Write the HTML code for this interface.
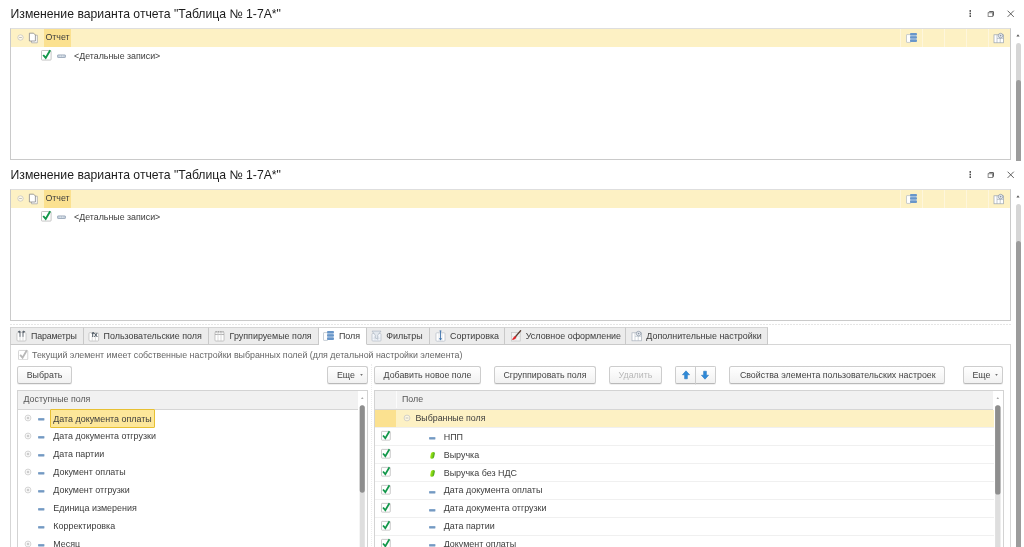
<!DOCTYPE html>
<html lang="ru"><head><meta charset="utf-8"><title>Изменение варианта отчета</title>
<style>
html,body{margin:0;padding:0;background:#fff}
body{width:1024px;height:547px;position:relative;overflow:hidden;font-family:"Liberation Sans",sans-serif;}
.a{position:absolute}
.t{position:absolute;white-space:nowrap;line-height:0;height:0}
.t::before{content:"";display:inline-block;height:0;vertical-align:baseline}
.btn{position:absolute;box-sizing:border-box;border:1px solid #cdcdcd;border-bottom-color:#b9b9b9;border-radius:2.5px;background:linear-gradient(#ffffff,#f1f1f1);text-align:center;font-size:8.85px;white-space:nowrap;box-shadow:0 1px 0 rgba(0,0,0,0.06)}
.tab{position:absolute;top:327px;height:18px;box-sizing:border-box;border:1px solid #c9c9c9;border-top-color:#d4d4d4;border-left:none;background:#ececec;font-size:8.85px;color:#333;white-space:nowrap}
.row{position:absolute;height:18px}
</style></head><body><div id="root" style="position:absolute;left:0;top:0;width:1024px;height:547px;will-change:transform">
<div class="t" style="left:10.5px;top:14.07px;font-size:12.22px;color:#1c1c1c;">Изменение варианта отчета "Таблица № 1-7А*"</div>

<svg class="a" style="left:965px;top:7px" width="52" height="14" viewBox="0 -0.4 52 14">
 <g fill="#4a4a4a"><rect x="4.5" y="2.7" width="1.5" height="1.7"/><rect x="4.5" y="5.3" width="1.5" height="1.7"/><rect x="4.5" y="7.9" width="1.5" height="1.7"/></g>
 <g fill="none"><path d="M24.3 4.25H28.4V8.3" stroke="#4a4a4a" stroke-width="1"/><path d="M23.1 5.4l1.2-1.15M27.7 9.1l0.7-0.8" stroke="#666" stroke-width="0.7"/><rect x="23.1" y="5.4" width="4.6" height="3.7" fill="#fff" stroke="#707070" stroke-width="0.8"/></g>
 <g stroke="#444" stroke-width="0.85"><path d="M42.6 3.3l6.2 6.2M48.8 3.3l-6.2 6.2"/></g>
</svg>
<div class="a" style="left:10px;top:28px;width:1001px;height:132px;border:1px solid #cacaca;border-top-color:#dedede;box-sizing:border-box;background:#fff"></div>
<div class="a" style="left:11px;top:29px;width:999px;height:18px;background:#fdf1c4"></div>
<div class="a" style="left:44px;top:29px;width:27px;height:18px;background:#fbe190"></div>
<div class="a" style="left:900px;top:29px;width:1px;height:18px;background:#fef6dc"></div>
<div class="a" style="left:922px;top:29px;width:1px;height:18px;background:#fef6dc"></div>
<div class="a" style="left:944px;top:29px;width:1px;height:18px;background:#fef6dc"></div>
<div class="a" style="left:966px;top:29px;width:1px;height:18px;background:#fef6dc"></div>
<div class="a" style="left:988px;top:29px;width:1px;height:18px;background:#fef6dc"></div>
<svg class="a" style="left:16px;top:32.9px" width="9" height="9" viewBox="0 0 9 9"><circle cx="4.5" cy="4.5" r="2.7" fill="#fff" fill-opacity="0.6" stroke="#c0c0c0" stroke-width="0.7"/><path d="M3.1 4.5h2.8" stroke="#a8a8a8" stroke-width="0.7"/></svg>
<svg class="a" style="left:28px;top:32px" width="11" height="12" viewBox="0 0 11 12"><path d="M3.5 3.2h5.8v7.6h-5.8z" fill="#fff" stroke="#aaa" stroke-width="0.8"/><path d="M1.4 1.2h4.2l1.8 1.8v6h-6z" fill="#fff" stroke="#888" stroke-width="0.8"/></svg>
<div class="t" style="left:45.4px;top:37.33px;font-size:8.85px;color:#3c3c3c;">Отчет</div>
<svg class="a" style="left:41px;top:48.7px" width="12" height="12" viewBox="0 0 12 12"><rect x="0.5" y="1.5" width="9.6" height="9.6" rx="0.8" fill="#fff" stroke="#bdbdbd" stroke-width="0.9"/><path d="M1.2 11.4h8.4" stroke="#e2e2e2" stroke-width="0.6"/><path d="M2.2 6l2.5 2.9 4.5-7.6" fill="none" stroke="#12974a" stroke-width="1.9" stroke-linecap="butt"/></svg>
<svg class="a" style="left:57px;top:54.2px" width="9" height="5" viewBox="0 0 9 5"><rect x="0.4" y="0.9" width="8.2" height="2.6" rx="0.8" fill="#c3cfdc" stroke="#8797aa" stroke-width="0.7"/><path d="M3.2 1.4v1.6M5.8 1.4v1.6" stroke="#f4f6f8" stroke-width="0.7"/></svg>
<div class="t" style="left:74px;top:56.13px;font-size:8.85px;color:#3c3c3c;">&lt;Детальные записи&gt;</div>
<svg class="a" style="left:906px;top:32px" width="12" height="12" viewBox="0 0 12 12"><rect x="0.5" y="2.6" width="4.2" height="7.8" rx="0.5" fill="#fff" stroke="#a4aebb" stroke-width="0.6"/><rect x="4.4" y="1.6" width="6.2" height="7.6" fill="#b6cde6"/><rect x="4" y="1" width="7" height="2.2" rx="1" fill="#6896c9"/><rect x="4" y="4.3" width="7" height="2.1" rx="1" fill="#6896c9"/><rect x="4" y="7.6" width="7" height="2.3" rx="1" fill="#6896c9"/></svg>
<svg class="a" style="left:993px;top:31.5px" width="12" height="12" viewBox="0 0 12 12">
      <rect x="1" y="2.8" width="9.4" height="8" fill="#fff" stroke="#98a2ae" stroke-width="0.7"/>
      <path d="M4 2.8v8M7.2 6v4.8M4 6.4h6.4" stroke="#98a2ae" stroke-width="0.6"/>
      <circle cx="7.6" cy="3.6" r="2.3" fill="#e4e8ee" stroke="#8894a2" stroke-width="0.7"/><circle cx="7.6" cy="3.6" r="0.8" fill="#8894a2"/></svg>
<div class="a" style="left:0;top:160px;width:1013px;height:29px;background:#fff"></div>
<div class="t" style="left:10.5px;top:175.07px;font-size:12.22px;color:#1c1c1c;">Изменение варианта отчета "Таблица № 1-7А*"</div>

<svg class="a" style="left:965px;top:168px" width="52" height="14" viewBox="0 -0.4 52 14">
 <g fill="#4a4a4a"><rect x="4.5" y="2.7" width="1.5" height="1.7"/><rect x="4.5" y="5.3" width="1.5" height="1.7"/><rect x="4.5" y="7.9" width="1.5" height="1.7"/></g>
 <g fill="none"><path d="M24.3 4.25H28.4V8.3" stroke="#4a4a4a" stroke-width="1"/><path d="M23.1 5.4l1.2-1.15M27.7 9.1l0.7-0.8" stroke="#666" stroke-width="0.7"/><rect x="23.1" y="5.4" width="4.6" height="3.7" fill="#fff" stroke="#707070" stroke-width="0.8"/></g>
 <g stroke="#444" stroke-width="0.85"><path d="M42.6 3.3l6.2 6.2M48.8 3.3l-6.2 6.2"/></g>
</svg>
<div class="a" style="left:10px;top:189px;width:1001px;height:132px;border:1px solid #cacaca;border-top-color:#dedede;box-sizing:border-box;background:#fff"></div>
<div class="a" style="left:11px;top:190px;width:999px;height:18px;background:#fdf1c4"></div>
<div class="a" style="left:44px;top:190px;width:27px;height:18px;background:#fbe190"></div>
<div class="a" style="left:900px;top:190px;width:1px;height:18px;background:#fef6dc"></div>
<div class="a" style="left:922px;top:190px;width:1px;height:18px;background:#fef6dc"></div>
<div class="a" style="left:944px;top:190px;width:1px;height:18px;background:#fef6dc"></div>
<div class="a" style="left:966px;top:190px;width:1px;height:18px;background:#fef6dc"></div>
<div class="a" style="left:988px;top:190px;width:1px;height:18px;background:#fef6dc"></div>
<svg class="a" style="left:16px;top:193.9px" width="9" height="9" viewBox="0 0 9 9"><circle cx="4.5" cy="4.5" r="2.7" fill="#fff" fill-opacity="0.6" stroke="#c0c0c0" stroke-width="0.7"/><path d="M3.1 4.5h2.8" stroke="#a8a8a8" stroke-width="0.7"/></svg>
<svg class="a" style="left:28px;top:193px" width="11" height="12" viewBox="0 0 11 12"><path d="M3.5 3.2h5.8v7.6h-5.8z" fill="#fff" stroke="#aaa" stroke-width="0.8"/><path d="M1.4 1.2h4.2l1.8 1.8v6h-6z" fill="#fff" stroke="#888" stroke-width="0.8"/></svg>
<div class="t" style="left:45.4px;top:198.33px;font-size:8.85px;color:#3c3c3c;">Отчет</div>
<svg class="a" style="left:41px;top:209.7px" width="12" height="12" viewBox="0 0 12 12"><rect x="0.5" y="1.5" width="9.6" height="9.6" rx="0.8" fill="#fff" stroke="#bdbdbd" stroke-width="0.9"/><path d="M1.2 11.4h8.4" stroke="#e2e2e2" stroke-width="0.6"/><path d="M2.2 6l2.5 2.9 4.5-7.6" fill="none" stroke="#12974a" stroke-width="1.9" stroke-linecap="butt"/></svg>
<svg class="a" style="left:57px;top:215.2px" width="9" height="5" viewBox="0 0 9 5"><rect x="0.4" y="0.9" width="8.2" height="2.6" rx="0.8" fill="#c3cfdc" stroke="#8797aa" stroke-width="0.7"/><path d="M3.2 1.4v1.6M5.8 1.4v1.6" stroke="#f4f6f8" stroke-width="0.7"/></svg>
<div class="t" style="left:74px;top:217.13px;font-size:8.85px;color:#3c3c3c;">&lt;Детальные записи&gt;</div>
<svg class="a" style="left:906px;top:193px" width="12" height="12" viewBox="0 0 12 12"><rect x="0.5" y="2.6" width="4.2" height="7.8" rx="0.5" fill="#fff" stroke="#a4aebb" stroke-width="0.6"/><rect x="4.4" y="1.6" width="6.2" height="7.6" fill="#b6cde6"/><rect x="4" y="1" width="7" height="2.2" rx="1" fill="#6896c9"/><rect x="4" y="4.3" width="7" height="2.1" rx="1" fill="#6896c9"/><rect x="4" y="7.6" width="7" height="2.3" rx="1" fill="#6896c9"/></svg>
<svg class="a" style="left:993px;top:192.5px" width="12" height="12" viewBox="0 0 12 12">
      <rect x="1" y="2.8" width="9.4" height="8" fill="#fff" stroke="#98a2ae" stroke-width="0.7"/>
      <path d="M4 2.8v8M7.2 6v4.8M4 6.4h6.4" stroke="#98a2ae" stroke-width="0.6"/>
      <circle cx="7.6" cy="3.6" r="2.3" fill="#e4e8ee" stroke="#8894a2" stroke-width="0.7"/><circle cx="7.6" cy="3.6" r="0.8" fill="#8894a2"/></svg>
<svg class="a" style="left:1016.4px;top:34.2px" width="4" height="3" viewBox="0 0 4 3"><path d="M0.4 2.6l1.6-2.3 1.6 2.3z" fill="#555"/></svg>
<div class="a" style="left:1016px;top:43px;width:5px;height:118px;border-radius:3px;background:#d6d6d6"></div>
<div class="a" style="left:1016px;top:80px;width:5px;height:81px;border-radius:3px 3px 0 0;background:#9c9c9c"></div>
<svg class="a" style="left:1016.4px;top:195.2px" width="4" height="3" viewBox="0 0 4 3"><path d="M0.4 2.6l1.6-2.3 1.6 2.3z" fill="#555"/></svg>
<div class="a" style="left:1016px;top:204px;width:5px;height:356px;border-radius:3px;background:#d6d6d6"></div>
<div class="a" style="left:1016px;top:241px;width:5px;height:319px;border-radius:3px 3px 0 0;background:#9c9c9c"></div>
<div class="a" style="left:10px;top:324px;width:1001px;height:1px;background:repeating-linear-gradient(90deg,#e6e6e6 0,#e6e6e6 2px,transparent 2px,transparent 3px)"></div>
<div class="a" style="left:10px;top:344px;width:1001px;height:220px;border:1px solid #d6d6d6;box-sizing:border-box;background:#fff"></div>
<div class="tab" style="left:10px;width:73.6px;border-left:1px solid #cfcfcf;"></div>
<svg class="a" style="left:15.5px;top:329.5px" width="11" height="12" viewBox="0 0 11 12"><rect x="1" y="2.6" width="9" height="8.4" rx="1" fill="#fff" stroke="#b9b9b9" stroke-width="0.7"/><path d="M4 6.5v4.3M7 6.5v4.3" stroke="#cdcdcd" stroke-width="0.7"/><path d="M4 1v5.8M7 1v5.8" stroke="#4c5660" stroke-width="0.9"/><path d="M3.8 0.5v2.6l-2.2-1.3zM7.2 0.5v2.6l2.2-1.3z" fill="#4c5660"/></svg>
<div class="t" style="left:31px;top:335.73px;font-size:8.85px;color:#3c3c3c;letter-spacing:-0.17px">Параметры</div>
<div class="tab" style="left:83.6px;width:125.0px;"></div>
<svg class="a" style="left:88.0px;top:329.5px" width="12" height="12" viewBox="0 0 12 12"><rect x="1" y="2.6" width="9.6" height="8.4" rx="1" fill="#fff" stroke="#b9b9b9" stroke-width="0.7"/><path d="M4.2 6v4.8M7.4 6v4.8" stroke="#cdcdcd" stroke-width="0.7"/><text x="3.4" y="6.6" font-size="7.4" font-weight="bold" fill="#4c5660" font-family="Liberation Sans, sans-serif" letter-spacing="-0.2">fx</text></svg>
<div class="t" style="left:103.5px;top:335.71px;font-size:8.93px;color:#3c3c3c;">Пользовательские поля</div>
<div class="tab" style="left:208.6px;width:110.6px;"></div>
<svg class="a" style="left:214.1px;top:329.5px" width="11" height="12" viewBox="0 0 11 12"><rect x="1" y="2" width="9" height="9" rx="0.8" fill="#fff" stroke="#b0b0b0" stroke-width="0.7"/><path d="M1 4.4h9" stroke="#999" stroke-width="0.8"/><path d="M4 2v9M7 2v9" stroke="#c8c8c8" stroke-width="0.7"/><path d="M1.4 1.8h8.2" stroke="#888" stroke-width="0.9" stroke-dasharray="1.4 1"/></svg>
<div class="t" style="left:229.6px;top:335.71px;font-size:8.93px;color:#3c3c3c;">Группируемые поля</div>
<div class="tab" style="left:319.2px;width:48.0px;background:#fff;border-bottom-color:#fff;"></div>
<svg class="a" style="left:323.4px;top:329.5px" width="12" height="12" viewBox="0 0 12 12"><rect x="0.5" y="2.6" width="4.2" height="7.8" rx="0.5" fill="#fff" stroke="#a4aebb" stroke-width="0.6"/><rect x="4.4" y="1.6" width="6.2" height="7.6" fill="#b6cde6"/><rect x="4" y="1" width="7" height="2.2" rx="1" fill="#6896c9"/><rect x="4" y="4.3" width="7" height="2.1" rx="1" fill="#6896c9"/><rect x="4" y="7.6" width="7" height="2.3" rx="1" fill="#6896c9"/></svg>
<div class="t" style="left:338.9px;top:335.71px;font-size:8.93px;color:#3c3c3c;">Поля</div>
<div class="tab" style="left:367.2px;width:62.80000000000001px;"></div>
<svg class="a" style="left:370.7px;top:329.5px" width="11" height="12" viewBox="0 0 11 12"><rect x="1" y="3.4" width="9" height="7.6" rx="0.8" fill="#f3f6fa" stroke="#b4bcc6" stroke-width="0.7"/><path d="M4 6v5M7 6v5M1 8.2h9" stroke="#d2d9e2" stroke-width="0.6"/><path d="M1 1.1h9l-3.3 4.1v4l-2.4-1.2v-2.8z" fill="#e3e8ee" stroke="#a3adba" stroke-width="0.6"/></svg>
<div class="t" style="left:386.2px;top:335.71px;font-size:8.93px;color:#3c3c3c;">Фильтры</div>
<div class="tab" style="left:430px;width:74.5px;"></div>
<svg class="a" style="left:434.5px;top:329.5px" width="11" height="12" viewBox="0 0 11 12"><rect x="1" y="2.8" width="9" height="8.4" rx="0.9" fill="#fff" stroke="#b4bcc6" stroke-width="0.7"/><path d="M4 2.8v8.4M7 2.8v8.4" stroke="#d4dae2" stroke-width="0.7"/><path d="M5.5 0.6v8.4" stroke="#3f74ad" stroke-width="0.9"/><path d="M3.9 8.2l1.6 2.3 1.6-2.3z" fill="#3f74ad"/><path d="M4.4 1h2.2" stroke="#3f74ad" stroke-width="0.7"/></svg>
<div class="t" style="left:450px;top:335.71px;font-size:8.93px;color:#3c3c3c;">Сортировка</div>
<div class="tab" style="left:504.5px;width:121.0px;"></div>
<svg class="a" style="left:510.29999999999995px;top:329.5px" width="12" height="12" viewBox="0 0 12 12"><rect x="1.6" y="2.6" width="8.6" height="8.4" fill="#f4f4f4" stroke="#c4c4c4" stroke-width="0.7"/><path d="M1.6 6.4h8.6M6 2.6v8.4" stroke="#d8d8d8" stroke-width="0.6"/><path d="M10.6 0.8l-5.6 6.4" stroke="#5a3c30" stroke-width="1.3" stroke-linecap="round"/><path d="M5.6 6.2c-1.4 0.2-2.6 1.6-3.8 3.6 1.8 0.2 3.8-0.6 4.6-2.6z" fill="#e0262a"/></svg>
<div class="t" style="left:525.8px;top:335.71px;font-size:8.93px;color:#3c3c3c;">Условное оформление</div>
<div class="tab" style="left:625.5px;width:142.0px;"></div>
<svg class="a" style="left:630.8px;top:329.5px" width="12" height="12" viewBox="0 0 12 12"><rect x="1" y="2.8" width="9.4" height="8" fill="#fff" stroke="#a8b0ba" stroke-width="0.7"/><path d="M4 2.8v8M7.2 6v4.8M4 6.4h6.4" stroke="#b4bcc6" stroke-width="0.6"/><circle cx="7.6" cy="3.6" r="2.3" fill="#e4e8ee" stroke="#8894a2" stroke-width="0.7"/><circle cx="7.6" cy="3.6" r="0.8" fill="#8894a2"/></svg>
<div class="t" style="left:646.3px;top:335.71px;font-size:8.93px;color:#3c3c3c;">Дополнительные настройки</div>
<svg class="a" style="left:18px;top:348.6px" width="11.6" height="11.6" viewBox="0 0 12 12"><rect x="0.5" y="1.5" width="9.6" height="9.6" rx="0.8" fill="#fff" stroke="#cfcfcf" stroke-width="0.9"/><path d="M1.2 11.4h8.4" stroke="#e2e2e2" stroke-width="0.6"/><path d="M2.2 6l2.5 2.9 4.5-7.6" fill="none" stroke="#b9b9b9" stroke-width="1.9" stroke-linecap="butt"/></svg>
<div class="t" style="left:32px;top:355.23px;font-size:8.85px;color:#666;">Текущий элемент имеет собственные настройки выбранных полей (для детальной настройки элемента)</div>
<div class="btn" style="left:17px;top:366px;width:55px;height:17.5px;line-height:16.0px;color:#444">Выбрать</div>
<div class="btn" style="left:327px;top:366px;width:41px;height:17.5px;line-height:16.0px;color:#444"><span style="padding-left:4.5px"></span>Еще<svg width="3" height="2" viewBox="0 0 3 2" style="margin-left:4.6px;position:relative;top:-1.6px"><path d="M0.2 0.3h2.6l-1.3 1.5z" fill="#444"/></svg></div>
<div class="btn" style="left:374px;top:366px;width:107px;height:17.5px;line-height:16.0px;color:#444">Добавить новое поле</div>
<div class="btn" style="left:494px;top:366px;width:102px;height:17.5px;line-height:16.0px;color:#444">Сгруппировать поля</div>
<div class="btn" style="left:609px;top:366px;width:53px;height:17.5px;line-height:16.0px;color:#b8b8b8">Удалить</div>
<div class="btn" style="left:675px;top:366px;width:21px;height:17.5px;border-radius:2px 0 0 2px"></div>
<div class="btn" style="left:695px;top:366px;width:21px;height:17.5px;border-radius:0 2px 2px 0"></div>
<svg class="a" style="left:680.5px;top:369.5px" width="10" height="10" viewBox="0 0 10 10"><path d="M5 0.8l3.6 4h-2.2v4h-2.8v-4h-2.2z" fill="#2f8ad8" stroke="#1f6fb8" stroke-width="0.5"/></svg>
<svg class="a" style="left:700px;top:369.5px" width="10" height="10" viewBox="0 0 10 10"><path d="M5 9.2l3.6-4h-2.2v-4h-2.8v4h-2.2z" fill="#2f8ad8" stroke="#1f6fb8" stroke-width="0.5"/></svg>
<div class="btn" style="left:729px;top:366px;width:216px;height:17.5px;line-height:16.0px;color:#444"><span style="padding-left:1.5px"></span>Свойства элемента пользовательских настроек</div>
<div class="btn" style="left:963px;top:366px;width:40px;height:17.5px;line-height:16.0px;color:#444"><span style="padding-left:4.5px"></span>Еще<svg width="3" height="2" viewBox="0 0 3 2" style="margin-left:4.6px;position:relative;top:-1.6px"><path d="M0.2 0.3h2.6l-1.3 1.5z" fill="#444"/></svg></div>
<div class="a" style="left:370.5px;top:364px;width:0;height:190px;border-left:1px dotted #ededed"></div>
<div class="a" style="left:17px;top:390px;width:351px;height:170px;border:1px solid #d3d3d3;box-sizing:border-box;background:#fff"></div>
<div class="a" style="left:18px;top:391px;width:340px;height:19px;background:#f1f1f1;border-bottom:1px solid #d6d6d6;box-sizing:border-box"></div>
<div class="t" style="left:23.5px;top:399.23px;font-size:8.85px;color:#555;">Доступные поля</div>
<svg class="a" style="left:358px;top:395px" width="9" height="160" viewBox="0 0 9 160"><path d="M2.95 4l1.3-2.1 1.3 2.1z" fill="#aaa"/><rect x="1.70" y="10.2" width="5.1" height="160" rx="2.6" fill="#dedede"/><rect x="1.70" y="10.2" width="5.1" height="87.5" rx="2.6" fill="#8e8e8e"/></svg>
<div class="a" style="left:50px;top:409px;width:105px;height:19px;background:#fde79a;border:1px solid #e7c033;box-sizing:border-box;border-radius:1px"></div>
<svg class="a" style="left:23.7px;top:414.4px" width="8" height="8" viewBox="0 0 8 8"><circle cx="4" cy="4" r="2.9" fill="#fff" stroke="#c2c2c2" stroke-width="0.7"/><path d="M2.6 4h2.8M4 2.6v2.8" stroke="#aaa" stroke-width="0.7"/></svg>
<svg class="a" style="left:38px;top:417.4px" width="7" height="5" viewBox="0 0 7 5"><rect x="0.1" y="1.05" width="6.3" height="2.5" rx="0.9" fill="#7096c0"/><rect x="0.1" y="1.05" width="6.3" height="1.1" rx="0.6" fill="#8fb0d2" opacity="0.6"/></svg>
<div class="t" style="left:53.3px;top:418.51px;font-size:8.93px;color:#3c3c3c;">Дата документа оплаты</div>
<svg class="a" style="left:23.7px;top:432.34999999999997px" width="8" height="8" viewBox="0 0 8 8"><circle cx="4" cy="4" r="2.9" fill="#fff" stroke="#c2c2c2" stroke-width="0.7"/><path d="M2.6 4h2.8M4 2.6v2.8" stroke="#aaa" stroke-width="0.7"/></svg>
<svg class="a" style="left:38px;top:435.34999999999997px" width="7" height="5" viewBox="0 0 7 5"><rect x="0.1" y="1.05" width="6.3" height="2.5" rx="0.9" fill="#7096c0"/><rect x="0.1" y="1.05" width="6.3" height="1.1" rx="0.6" fill="#8fb0d2" opacity="0.6"/></svg>
<div class="t" style="left:53.3px;top:436.46px;font-size:8.93px;color:#3c3c3c;">Дата документа отгрузки</div>
<svg class="a" style="left:23.7px;top:450.29999999999995px" width="8" height="8" viewBox="0 0 8 8"><circle cx="4" cy="4" r="2.9" fill="#fff" stroke="#c2c2c2" stroke-width="0.7"/><path d="M2.6 4h2.8M4 2.6v2.8" stroke="#aaa" stroke-width="0.7"/></svg>
<svg class="a" style="left:38px;top:453.29999999999995px" width="7" height="5" viewBox="0 0 7 5"><rect x="0.1" y="1.05" width="6.3" height="2.5" rx="0.9" fill="#7096c0"/><rect x="0.1" y="1.05" width="6.3" height="1.1" rx="0.6" fill="#8fb0d2" opacity="0.6"/></svg>
<div class="t" style="left:53.3px;top:454.41px;font-size:8.93px;color:#3c3c3c;">Дата партии</div>
<svg class="a" style="left:23.7px;top:468.25px" width="8" height="8" viewBox="0 0 8 8"><circle cx="4" cy="4" r="2.9" fill="#fff" stroke="#c2c2c2" stroke-width="0.7"/><path d="M2.6 4h2.8M4 2.6v2.8" stroke="#aaa" stroke-width="0.7"/></svg>
<svg class="a" style="left:38px;top:471.25px" width="7" height="5" viewBox="0 0 7 5"><rect x="0.1" y="1.05" width="6.3" height="2.5" rx="0.9" fill="#7096c0"/><rect x="0.1" y="1.05" width="6.3" height="1.1" rx="0.6" fill="#8fb0d2" opacity="0.6"/></svg>
<div class="t" style="left:53.3px;top:472.36px;font-size:8.93px;color:#3c3c3c;">Документ оплаты</div>
<svg class="a" style="left:23.7px;top:486.2px" width="8" height="8" viewBox="0 0 8 8"><circle cx="4" cy="4" r="2.9" fill="#fff" stroke="#c2c2c2" stroke-width="0.7"/><path d="M2.6 4h2.8M4 2.6v2.8" stroke="#aaa" stroke-width="0.7"/></svg>
<svg class="a" style="left:38px;top:489.2px" width="7" height="5" viewBox="0 0 7 5"><rect x="0.1" y="1.05" width="6.3" height="2.5" rx="0.9" fill="#7096c0"/><rect x="0.1" y="1.05" width="6.3" height="1.1" rx="0.6" fill="#8fb0d2" opacity="0.6"/></svg>
<div class="t" style="left:53.3px;top:490.31px;font-size:8.93px;color:#3c3c3c;">Документ отгрузки</div>
<svg class="a" style="left:38px;top:507.15px" width="7" height="5" viewBox="0 0 7 5"><rect x="0.1" y="1.05" width="6.3" height="2.5" rx="0.9" fill="#7096c0"/><rect x="0.1" y="1.05" width="6.3" height="1.1" rx="0.6" fill="#8fb0d2" opacity="0.6"/></svg>
<div class="t" style="left:53.3px;top:508.26px;font-size:8.93px;color:#3c3c3c;">Единица измерения</div>
<svg class="a" style="left:38px;top:525.0999999999999px" width="7" height="5" viewBox="0 0 7 5"><rect x="0.1" y="1.05" width="6.3" height="2.5" rx="0.9" fill="#7096c0"/><rect x="0.1" y="1.05" width="6.3" height="1.1" rx="0.6" fill="#8fb0d2" opacity="0.6"/></svg>
<div class="t" style="left:53.3px;top:526.21px;font-size:8.93px;color:#3c3c3c;">Корректировка</div>
<svg class="a" style="left:23.7px;top:540.05px" width="8" height="8" viewBox="0 0 8 8"><circle cx="4" cy="4" r="2.9" fill="#fff" stroke="#c2c2c2" stroke-width="0.7"/><path d="M2.6 4h2.8M4 2.6v2.8" stroke="#aaa" stroke-width="0.7"/></svg>
<svg class="a" style="left:38px;top:543.05px" width="7" height="5" viewBox="0 0 7 5"><rect x="0.1" y="1.05" width="6.3" height="2.5" rx="0.9" fill="#7096c0"/><rect x="0.1" y="1.05" width="6.3" height="1.1" rx="0.6" fill="#8fb0d2" opacity="0.6"/></svg>
<div class="t" style="left:53.3px;top:544.16px;font-size:8.93px;color:#3c3c3c;">Месяц</div>
<div class="a" style="left:374px;top:390px;width:630px;height:170px;border:1px solid #d3d3d3;box-sizing:border-box;background:#fff"></div>
<div class="a" style="left:375px;top:391px;width:618px;height:19px;background:#f1f1f1;border-bottom:1px solid #d6d6d6;box-sizing:border-box"></div>
<div class="a" style="left:396px;top:391px;width:1px;height:17px;background:#fbfbfb"></div>
<div class="t" style="left:402px;top:399.23px;font-size:8.85px;color:#555;">Поле</div>
<div class="a" style="left:375px;top:410px;width:619px;height:17px;background:#fdf1c4"></div>
<div class="a" style="left:375px;top:410px;width:21px;height:17px;background:#fbe190"></div>
<svg class="a" style="left:403px;top:414px" width="8" height="8" viewBox="0 0 8 8"><circle cx="4" cy="4" r="2.9" fill="#fff" fill-opacity="0.5" stroke="#c2c2c2" stroke-width="0.7"/><path d="M2.6 4h2.8" stroke="#aaa" stroke-width="0.7"/></svg>
<div class="t" style="left:415.4px;top:418.43px;font-size:8.85px;color:#3c3c3c;">Выбранные поля</div>
<div class="a" style="left:375px;top:444.90000000000003px;width:619px;height:1px;background:#f0f0f0"></div>
<svg class="a" style="left:381px;top:430.3px" width="11" height="11" viewBox="0 0 12 12"><rect x="0.5" y="1.5" width="9.6" height="9.6" rx="0.8" fill="#fff" stroke="#bdbdbd" stroke-width="0.9"/><path d="M1.2 11.4h8.4" stroke="#e2e2e2" stroke-width="0.6"/><path d="M2.2 6l2.5 2.9 4.5-7.6" fill="none" stroke="#12974a" stroke-width="1.9" stroke-linecap="butt"/></svg>
<svg class="a" style="left:428.5px;top:435.7px" width="7" height="5" viewBox="0 0 7 5"><rect x="0.1" y="1.05" width="6.3" height="2.5" rx="0.9" fill="#7096c0"/><rect x="0.1" y="1.05" width="6.3" height="1.1" rx="0.6" fill="#8fb0d2" opacity="0.6"/></svg>
<div class="t" style="left:443.7px;top:436.6px;font-size:8.95px;color:#3c3c3c;">НПП</div>
<div class="a" style="left:375px;top:462.85px;width:619px;height:1px;background:#f0f0f0"></div>
<svg class="a" style="left:381px;top:448.25px" width="11" height="11" viewBox="0 0 12 12"><rect x="0.5" y="1.5" width="9.6" height="9.6" rx="0.8" fill="#fff" stroke="#bdbdbd" stroke-width="0.9"/><path d="M1.2 11.4h8.4" stroke="#e2e2e2" stroke-width="0.6"/><path d="M2.2 6l2.5 2.9 4.5-7.6" fill="none" stroke="#12974a" stroke-width="1.9" stroke-linecap="butt"/></svg>
<svg class="a" style="left:428.6px;top:450.65px" width="8" height="9" viewBox="0 0 8 9"><defs><linearGradient id="gg" x1="0" y1="0" x2="1" y2="0"><stop offset="0" stop-color="#a4ea18"/><stop offset="0.55" stop-color="#78cc14"/><stop offset="1" stop-color="#3f9c1c"/></linearGradient></defs><rect x="2.5" y="0.9" width="3.9" height="6.8" rx="1.7" transform="skewX(-12)" fill="url(#gg)"/></svg>
<div class="t" style="left:443.7px;top:454.55px;font-size:8.95px;color:#3c3c3c;">Выручка</div>
<div class="a" style="left:375px;top:480.8px;width:619px;height:1px;background:#f0f0f0"></div>
<svg class="a" style="left:381px;top:466.2px" width="11" height="11" viewBox="0 0 12 12"><rect x="0.5" y="1.5" width="9.6" height="9.6" rx="0.8" fill="#fff" stroke="#bdbdbd" stroke-width="0.9"/><path d="M1.2 11.4h8.4" stroke="#e2e2e2" stroke-width="0.6"/><path d="M2.2 6l2.5 2.9 4.5-7.6" fill="none" stroke="#12974a" stroke-width="1.9" stroke-linecap="butt"/></svg>
<svg class="a" style="left:428.6px;top:468.59999999999997px" width="8" height="9" viewBox="0 0 8 9"><defs><linearGradient id="gg" x1="0" y1="0" x2="1" y2="0"><stop offset="0" stop-color="#a4ea18"/><stop offset="0.55" stop-color="#78cc14"/><stop offset="1" stop-color="#3f9c1c"/></linearGradient></defs><rect x="2.5" y="0.9" width="3.9" height="6.8" rx="1.7" transform="skewX(-12)" fill="url(#gg)"/></svg>
<div class="t" style="left:443.7px;top:472.5px;font-size:8.95px;color:#3c3c3c;">Выручка без НДС</div>
<div class="a" style="left:375px;top:498.75px;width:619px;height:1px;background:#f0f0f0"></div>
<svg class="a" style="left:381px;top:484.15px" width="11" height="11" viewBox="0 0 12 12"><rect x="0.5" y="1.5" width="9.6" height="9.6" rx="0.8" fill="#fff" stroke="#bdbdbd" stroke-width="0.9"/><path d="M1.2 11.4h8.4" stroke="#e2e2e2" stroke-width="0.6"/><path d="M2.2 6l2.5 2.9 4.5-7.6" fill="none" stroke="#12974a" stroke-width="1.9" stroke-linecap="butt"/></svg>
<svg class="a" style="left:428.5px;top:489.54999999999995px" width="7" height="5" viewBox="0 0 7 5"><rect x="0.1" y="1.05" width="6.3" height="2.5" rx="0.9" fill="#7096c0"/><rect x="0.1" y="1.05" width="6.3" height="1.1" rx="0.6" fill="#8fb0d2" opacity="0.6"/></svg>
<div class="t" style="left:443.7px;top:490.45px;font-size:8.95px;color:#3c3c3c;">Дата документа оплаты</div>
<div class="a" style="left:375px;top:516.7px;width:619px;height:1px;background:#f0f0f0"></div>
<svg class="a" style="left:381px;top:502.1px" width="11" height="11" viewBox="0 0 12 12"><rect x="0.5" y="1.5" width="9.6" height="9.6" rx="0.8" fill="#fff" stroke="#bdbdbd" stroke-width="0.9"/><path d="M1.2 11.4h8.4" stroke="#e2e2e2" stroke-width="0.6"/><path d="M2.2 6l2.5 2.9 4.5-7.6" fill="none" stroke="#12974a" stroke-width="1.9" stroke-linecap="butt"/></svg>
<svg class="a" style="left:428.5px;top:507.5px" width="7" height="5" viewBox="0 0 7 5"><rect x="0.1" y="1.05" width="6.3" height="2.5" rx="0.9" fill="#7096c0"/><rect x="0.1" y="1.05" width="6.3" height="1.1" rx="0.6" fill="#8fb0d2" opacity="0.6"/></svg>
<div class="t" style="left:443.7px;top:508.4px;font-size:8.95px;color:#3c3c3c;">Дата документа отгрузки</div>
<div class="a" style="left:375px;top:534.65px;width:619px;height:1px;background:#f0f0f0"></div>
<svg class="a" style="left:381px;top:520.05px" width="11" height="11" viewBox="0 0 12 12"><rect x="0.5" y="1.5" width="9.6" height="9.6" rx="0.8" fill="#fff" stroke="#bdbdbd" stroke-width="0.9"/><path d="M1.2 11.4h8.4" stroke="#e2e2e2" stroke-width="0.6"/><path d="M2.2 6l2.5 2.9 4.5-7.6" fill="none" stroke="#12974a" stroke-width="1.9" stroke-linecap="butt"/></svg>
<svg class="a" style="left:428.5px;top:525.4499999999999px" width="7" height="5" viewBox="0 0 7 5"><rect x="0.1" y="1.05" width="6.3" height="2.5" rx="0.9" fill="#7096c0"/><rect x="0.1" y="1.05" width="6.3" height="1.1" rx="0.6" fill="#8fb0d2" opacity="0.6"/></svg>
<div class="t" style="left:443.7px;top:526.35px;font-size:8.95px;color:#3c3c3c;">Дата партии</div>
<div class="a" style="left:375px;top:552.6px;width:619px;height:1px;background:#f0f0f0"></div>
<svg class="a" style="left:381px;top:538.0px" width="11" height="11" viewBox="0 0 12 12"><rect x="0.5" y="1.5" width="9.6" height="9.6" rx="0.8" fill="#fff" stroke="#bdbdbd" stroke-width="0.9"/><path d="M1.2 11.4h8.4" stroke="#e2e2e2" stroke-width="0.6"/><path d="M2.2 6l2.5 2.9 4.5-7.6" fill="none" stroke="#12974a" stroke-width="1.9" stroke-linecap="butt"/></svg>
<svg class="a" style="left:428.5px;top:543.4px" width="7" height="5" viewBox="0 0 7 5"><rect x="0.1" y="1.05" width="6.3" height="2.5" rx="0.9" fill="#7096c0"/><rect x="0.1" y="1.05" width="6.3" height="1.1" rx="0.6" fill="#8fb0d2" opacity="0.6"/></svg>
<div class="t" style="left:443.7px;top:544.3px;font-size:8.95px;color:#3c3c3c;">Документ оплаты</div>
<div class="a" style="left:375px;top:427px;width:619px;height:1px;background:#f0f0f0"></div>
<svg class="a" style="left:994px;top:395px" width="9" height="160" viewBox="0 0 9 160"><path d="M2.50 4l1.3-2.1 1.3 2.1z" fill="#aaa"/><rect x="1.10" y="10.2" width="5.4" height="160" rx="2.6" fill="#dedede"/><rect x="1.10" y="10.2" width="5.4" height="89.3" rx="2.6" fill="#8e8e8e"/></svg>
</div></body></html>
